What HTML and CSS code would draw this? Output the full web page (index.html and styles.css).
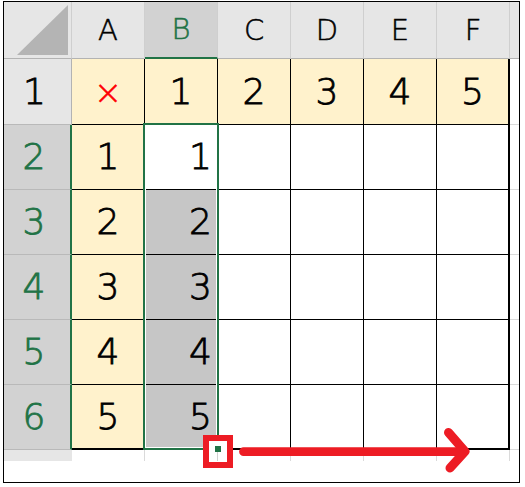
FILE: index.html
```html
<!DOCTYPE html>
<html lang="ja">
<head>
<meta charset="utf-8">
<title>Sheet</title>
<link rel="stylesheet" href="styles.css">
</head>
<body>
<div class="frame">
  <div class="sheet">
    <div class="hd corner"><svg class="tri" width="67" height="56" viewBox="0 0 67 56"><polygon points="64,3 13,53 64,53"/></svg></div>
    <div class="hd">A</div>
    <div class="hd sel">B</div>
    <div class="hd">C</div>
    <div class="hd">D</div>
    <div class="hd">E</div>
    <div class="hd">F</div>
    <div class="hd ext"></div>

    <div class="rh">1</div>
    <div class="c cream"><span class="times">×</span></div>
    <div class="c cream">1</div>
    <div class="c cream">2</div>
    <div class="c cream">3</div>
    <div class="c cream">4</div>
    <div class="c cream lc">5</div>
    <div class="x"></div>

    <div class="rh sel">2</div>
    <div class="c cream">1</div>
    <div class="c num">1</div>
    <div class="c"></div><div class="c"></div><div class="c"></div><div class="c lc"></div>
    <div class="x"></div>

    <div class="rh sel">3</div>
    <div class="c cream">2</div>
    <div class="c num gray">2</div>
    <div class="c"></div><div class="c"></div><div class="c"></div><div class="c lc"></div>
    <div class="x"></div>

    <div class="rh sel">4</div>
    <div class="c cream">3</div>
    <div class="c num gray">3</div>
    <div class="c"></div><div class="c"></div><div class="c"></div><div class="c lc"></div>
    <div class="x"></div>

    <div class="rh sel">5</div>
    <div class="c cream">4</div>
    <div class="c num gray">4</div>
    <div class="c"></div><div class="c"></div><div class="c"></div><div class="c lc"></div>
    <div class="x"></div>

    <div class="rh sel">6</div>
    <div class="c cream lr">5</div>
    <div class="c num gray lr">5</div>
    <div class="c lr"></div><div class="c lr"></div><div class="c lr"></div><div class="c lc lr"></div>
    <div class="x"></div>

    <div class="rhp"></div>
    <div class="p"></div><div class="p"></div><div class="p"></div><div class="p"></div><div class="p"></div><div class="p"></div>
    <div class="p pe"></div>
  </div>
  <div class="selection"></div>
  <div class="handle-box"><span class="handle"></span></div>
  <svg class="arrow" width="525" height="487" viewBox="0 0 525 487">
    <line x1="243.5" y1="451.7" x2="462" y2="451.7" stroke="#ed1c24" stroke-width="8.7" stroke-linecap="round"/>
    <polyline points="448.5,432.5 465,451.5 450,468" fill="none" stroke="#ed1c24" stroke-width="9" stroke-linecap="round" stroke-linejoin="round"/>
  </svg>
</div>
</body>
</html>
```
FILE: styles.css
```css
* { box-sizing: border-box; }
html, body { margin: 0; padding: 0; background: #fff; }
body {
  font-family: "DejaVu Sans", "Noto Sans CJK JP", sans-serif;
  color: #000;
  font-weight: 200;
  -webkit-text-stroke: 0.8px currentColor;
}

.frame {
  position: relative;
  width: 517px;
  height: 482px;
  margin: 1px 0 0 3px;
  border: 1px solid #000;
  overflow: hidden;
  background: #fff;
}

.sheet {
  display: grid;
  grid-template-columns: 68px repeat(6, 73px) 9px;
  grid-template-rows: 57px 66px repeat(5, 65px) 11px;
}

.sheet > div {
  display: flex;
  align-items: center;
  justify-content: center;
  line-height: 1;
}

.hd {
  background: #e6e6e6;
  border-right: 1px solid #cfcfcf;
  border-bottom: 1px solid #b3b3b3;
  font-size: 29px;
  -webkit-text-stroke: 0.5px currentColor;
}
.hd.sel {
  background: #d2d2d2;
  color: #217346;
  border-bottom: 2px solid #217346;
}
.hd.ext { border-right: none; }
.corner { position: relative; padding: 0; }
.tri { display: block; position: absolute; left: 0; top: 0; }
.tri polygon { fill: #b4b4b4; }

.rh {
  background: #e6e6e6;
  border-right: 1px solid #b3b3b3;
  border-bottom: 1px solid #b9b9b9;
  font-size: 36px;
  padding-right: 6px;
}
.rh.sel {
  background: #d2d2d2;
  color: #217346;
  border-right: 2px solid #217346;
}

.c {
  background: #fff;
  border-right: 1px solid #000;
  border-bottom: 1px solid #000;
  font-size: 36px;
}
.cream { background: #fff2cc; }
.sheet > .num { justify-content: flex-end; padding-right: 5px; }
.gray { background: #c6c6c6; }
.lc { border-right: 2px solid #000; }
.lr { border-bottom: 2px solid #000; }

.times { color: #ff0000; font-size: 34px; -webkit-text-stroke: 0.5px currentColor; }

.x { background: #fff; border-bottom: 1px solid #dadada; }

.rhp { background: #e6e6e6; }
.p { background: #fff; border-right: 1px solid #dadada; }
.p.pe { border-right: none; }

.selection {
  position: absolute;
  left: 139px;
  top: 121px;
  width: 76px;
  height: 327px;
  border: 2px solid #217346;
  box-shadow: inset 0 0 0 1px #fff;
}

.handle-box {
  position: absolute;
  left: 199px;
  top: 433px;
  width: 30px;
  height: 33px;
  border: 6px solid #ed1c24;
  background: #fff;
}
.handle-box::after {
  content: "";
  position: absolute;
  left: 8px;
  top: 11px;
  width: 1px;
  height: 9px;
  background: #d0d0d0;
}
.handle {
  position: absolute;
  left: 6px;
  top: 5px;
  width: 6px;
  height: 6px;
  background: #217346;
}

.arrow {
  position: absolute;
  left: -4px;
  top: -2px;
  overflow: visible;
}
```
